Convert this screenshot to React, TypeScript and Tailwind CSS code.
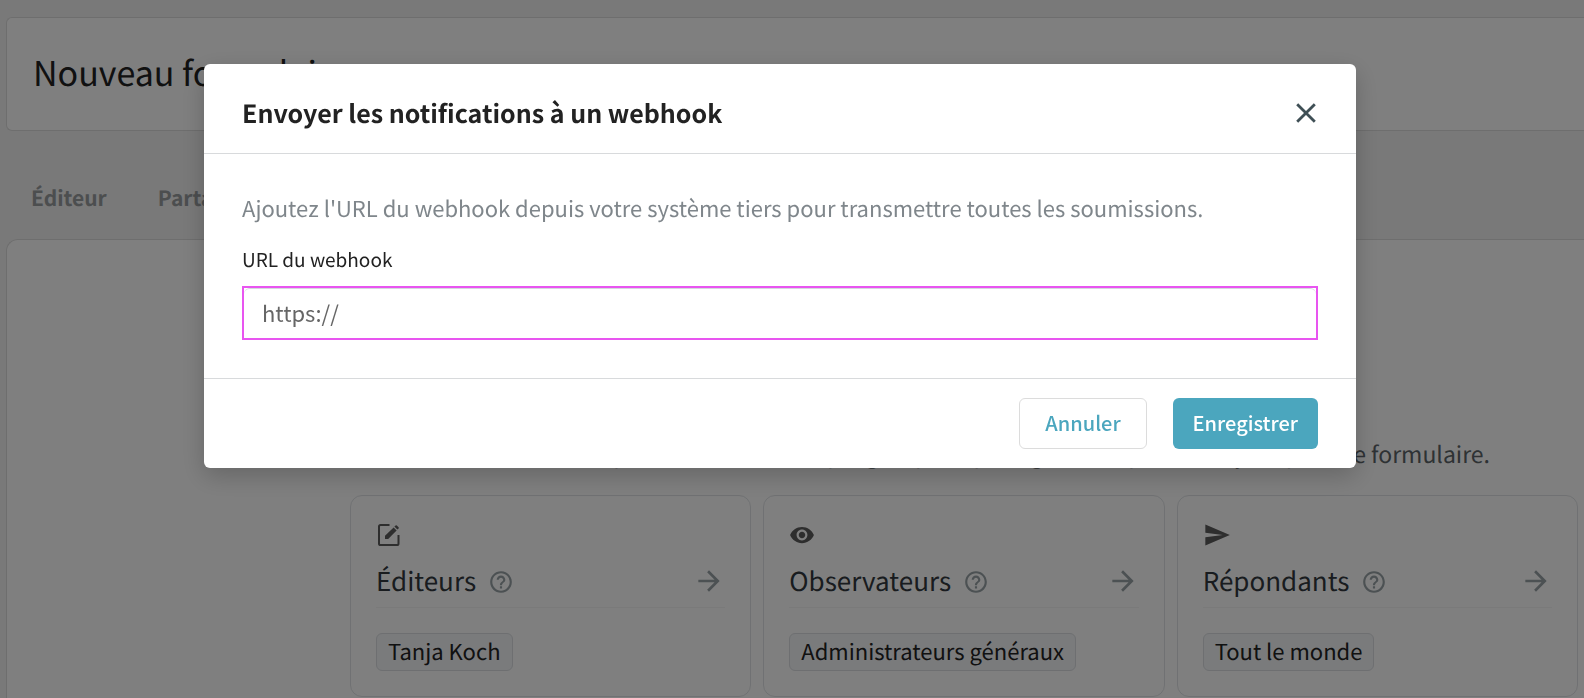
import { useState } from 'react';
import { MdArrowForward, MdHelpOutline, MdSend, MdVisibility } from 'react-icons/md';

const tabs = ['Éditeur', 'Partager'];

const roles = [
  { id: 'editors', title: 'Éditeurs', member: 'Tanja Koch', icon: <EditIcon /> },
  { id: 'viewers', title: 'Observateurs', member: 'Administrateurs généraux', icon: <MdVisibility className="w-[26px] h-[26px]" /> },
  { id: 'respondents', title: 'Répondants', member: 'Tout le monde', icon: <MdSend className="w-7 h-7" /> },
];

function EditIcon() {
  return (
    <svg viewBox="0 0 26 26" className="w-[26px] h-[26px]" fill="none" stroke="currentColor" strokeWidth="2">
      <path d="M13.5 3H4.6Q3 3 3 4.6V21.4Q3 23 4.6 23H20.9Q22.5 23 22.5 21.4V13" />
      <path d="M9 17V13.8L17.6 5.4L20.6 8.4L12.2 17Z" fill="currentColor" stroke="none" />
      <path d="M18.4 4.6L19.6 3.4Q20.2 2.9 20.8 3.4L22.6 5.2Q23 5.8 22.6 6.4L21.4 7.6Z" fill="currentColor" stroke="none" />
    </svg>
  );
}

function CloseIcon() {
  return (
    <svg viewBox="0 0 20 20" className="w-5 h-5" fill="none" stroke="currentColor" strokeWidth="2.8">
      <path d="M1.2 1.2L18.8 18.8M18.8 1.2L1.2 18.8" />
    </svg>
  );
}

function RoleCard({ role }: { role: (typeof roles)[number] }) {
  return (
    <section className="rounded-xl border border-[#e0e3e6] p-[25px]">
      <div className="flex h-7 items-center text-[#5c5c5c]">{role.icon}</div>
      <div className="mt-2 flex h-[51px] items-start border-b border-[#f5f5f5] pt-2">
        <h3 className="text-[26px] leading-8 text-[#32393f]">{role.title}</h3>
        <button aria-label="Aide" className="mt-1 ml-3 text-[#98a2a6]">
          <MdHelpOutline className="w-[26px] h-[26px]" />
        </button>
        <button aria-label={role.title} className="ml-auto text-[#98a2a6]">
          <MdArrowForward className="w-8 h-8" />
        </button>
      </div>
      <div className="mt-[25px] flex">
        <span className="rounded-md border border-[#dcdfe2] bg-[#f4f6f9] px-[11px] pb-0.5 text-[22px] leading-[34px] text-[#222]">
          {role.member}
        </span>
      </div>
    </section>
  );
}

export default function App() {
  const [url, setUrl] = useState('');

  return (
    <div className="h-screen overflow-hidden bg-[#f2f2f2] font-['Noto_Sans_CJK_SC','Source_Sans_Pro',sans-serif] [text-rendering:geometricPrecision]">
      <div className="pt-[17px] pl-1.5">
        <header className="rounded-l-md border border-r-0 border-[#dcdcdc] bg-white px-[26px] pt-[30px] pb-[34px]">
          <h1 className="text-[34px] leading-12 text-[#222]">Nouveau formulaire</h1>
        </header>

        <nav className="flex h-[108px] items-center gap-[51px] px-[25px] pt-[26px]">
          {tabs.map((tab) => (
            <a key={tab} href="#" className="text-[21px] leading-8 font-bold text-[#989c9f]">
              {tab}
            </a>
          ))}
        </nav>

        <main className="grid h-[520px] grid-cols-[343px_1fr] rounded-tl-xl border border-r-0 border-[#dcdcdc] bg-white pr-1.5">
          <div />
          <div className="pt-[197px]">
            <p className="pr-[88px] text-right text-[23px] leading-8 whitespace-nowrap text-[#5c6469]">
              Définissez les permissions de chaque groupe et partagez les réponses reçues pour ce formulaire.
            </p>
            <div className="mt-[26px] grid grid-cols-3 gap-3">
              {roles.map((role) => (
                <RoleCard key={role.id} role={role} />
              ))}
            </div>
          </div>
        </main>
      </div>

      <div className="fixed inset-0 bg-black/50 pt-16 pr-6">
        <div
          role="dialog"
          aria-modal="true"
          aria-labelledby="webhook-title"
          className="mx-auto max-w-6xl rounded-md bg-white shadow-[0_8px_24px_rgba(0,0,0,0.2)]"
        >
          <div className="flex h-[90px] items-center justify-between border-b border-[#d8dadc] px-[38px] pt-2">
            <h2 id="webhook-title" className="text-[25px] leading-9 font-bold text-[#222]">
              Envoyer les notifications à un webhook
            </h2>
            <button aria-label="Fermer" className="mr-0.5 text-[#3f4f55]">
              <CloseIcon />
            </button>
          </div>

          <div className="px-[38px] pt-9 pb-[38px]">
            <p className="text-[22px] leading-9 text-[#7f868b]">
              Ajoutez l'URL du webhook depuis votre système tiers pour transmettre toutes les soumissions.
            </p>
            <label htmlFor="webhook-url" className="mt-[18px] block text-[19px] leading-8 text-[#222]">
              URL du webhook
            </label>
            <div className="mt-2.5 border-2 border-[#e855f0]">
              <input
                id="webhook-url"
                type="url"
                value={url}
                onChange={(e) => setUrl(e.target.value)}
                placeholder="https://"
                className="block h-[50px] w-full rounded-md border-t border-[#d5d9de] px-[18px] pb-1 text-[22px] text-[#222] outline-none placeholder:text-[#666]"
              />
            </div>
          </div>

          <div className="flex justify-end gap-[26px] border-t border-[#d8dadc] px-[38px] py-[19px]">
            <button className="h-[51px] rounded-md border border-[#dcdcdc] px-[25px] pb-0.5 text-[20px] font-medium text-[#4ba6be]">
              Annuler
            </button>
            <button className="h-[51px] rounded-md bg-[#4ba6be] px-5 pb-0.5 text-[20px] font-medium text-white">
              Enregistrer
            </button>
          </div>
        </div>
      </div>
    </div>
  );
}
